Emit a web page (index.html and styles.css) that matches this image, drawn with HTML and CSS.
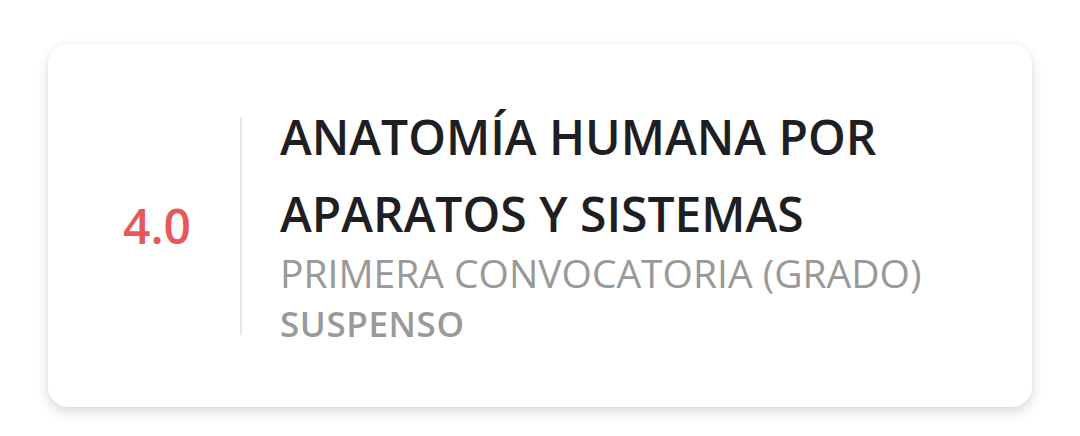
FILE: index.html
```html
<!DOCTYPE html>
<html lang="es">
<head>
<meta charset="utf-8">
<link rel="stylesheet" href="styles.css">
</head>
<body>
<div class="page">
  <div class="card">
    <div class="score">4.0</div>
    <div class="divider"></div>
    <div class="info">
      <div class="title">ANATOMÍA HUMANA POR APARATOS Y SISTEMAS</div>
      <div class="sub">PRIMERA CONVOCATORIA (GRADO)</div>
      <div class="status">SUSPENSO</div>
    </div>
  </div>
</div>
</body>
</html>
```

FILE: styles.css
```css
html, body {
  margin: 0;
  padding: 0;
  background: #ffffff;
}
body {
  font-family: "Open Sans", "Noto Sans", sans-serif;
  width: 1080px;
  height: 436px;
  overflow: hidden;
}
.page {
  padding: 44px 48px 0 48px;
}
.card {
  box-sizing: border-box;
  width: 984px;
  height: 363px;
  background: #fff;
  border-radius: 20px;
  box-shadow: 0 5px 12px rgba(0, 0, 0, 0.15), 0 0 3px rgba(0, 0, 0, 0.05);
  display: flex;
  align-items: center;
  padding-left: 75px;
}
.score {
  font-size: 48px;
  font-weight: 600;
  color: #e85858;
  line-height: 60px;
  width: 67px;
  white-space: nowrap;
}
.divider {
  width: 2px;
  height: 218px;
  background: #e6e6e6;
  margin-left: 50px;
  margin-right: 38px;
  flex: none;
}
.info {
  display: flex;
  flex-direction: column;
  width: 660px;
}
.title {
  font-size: 48px;
  font-weight: 600;
  line-height: 77px;
  color: #1e1e23;
  width: 620px;
}
.sub {
  font-size: 39px;
  font-weight: 400;
  line-height: 42px;
  color: #999999;
  white-space: nowrap;
}
.status {
  font-size: 35px;
  font-weight: 600;
  letter-spacing: 0.6px;
  line-height: 60px;
  color: #999999;
}
```
